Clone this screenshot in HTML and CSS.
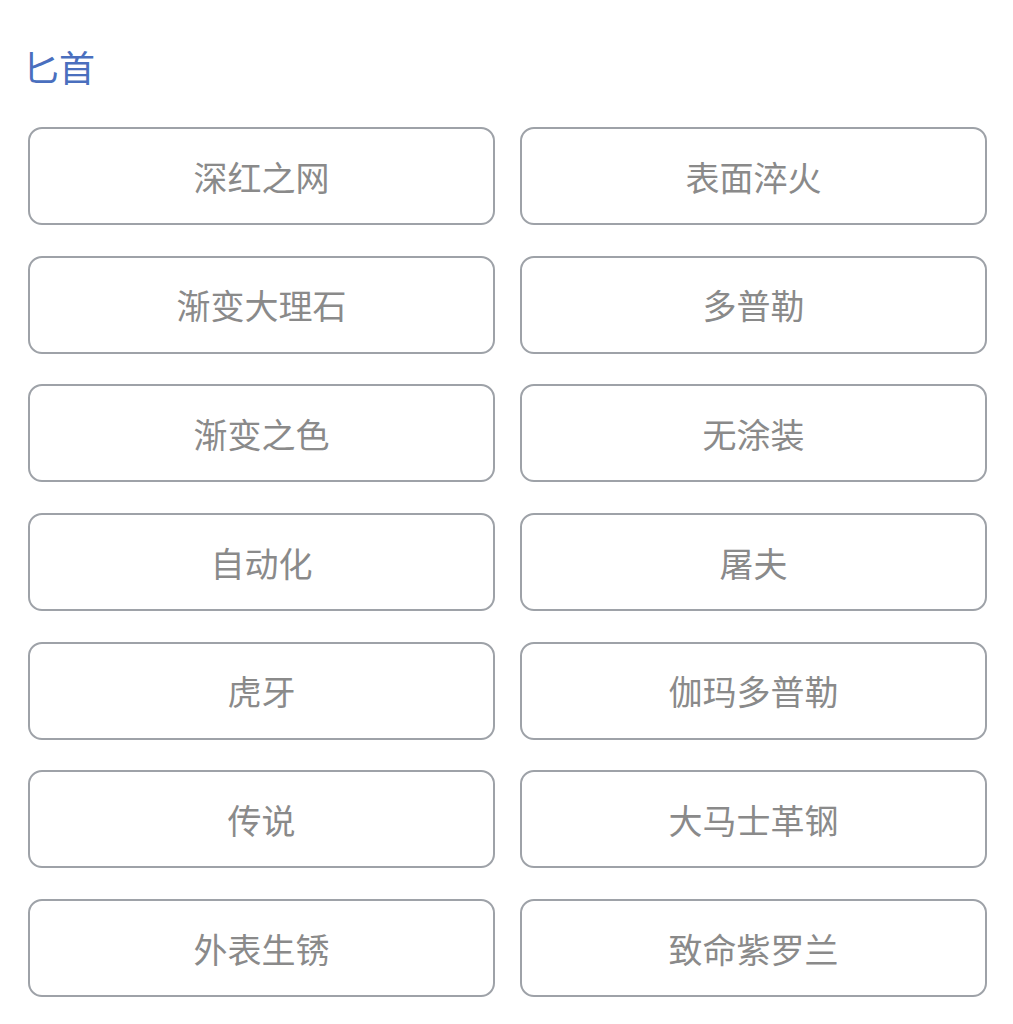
FILE: index.html
```html
<html>
<head>
  <meta charset="utf-8">
  <title>匕首</title>
  <link rel="stylesheet" href="styles.css">
</head>
<body>
  <div class="panel">
    <h2 class="weapon-title">匕首</h2>
    <div class="skin-grid">
      <button class="skin">深红之网</button>
      <button class="skin">表面淬火</button>
      <button class="skin">渐变大理石</button>
      <button class="skin">多普勒</button>
      <button class="skin">渐变之色</button>
      <button class="skin">无涂装</button>
      <button class="skin">自动化</button>
      <button class="skin">屠夫</button>
      <button class="skin">虎牙</button>
      <button class="skin">伽玛多普勒</button>
      <button class="skin">传说</button>
      <button class="skin">大马士革钢</button>
      <button class="skin">外表生锈</button>
      <button class="skin">致命紫罗兰</button>
    </div>
  </div>
</body>
</html>
```

FILE: styles.css
```css
body {
    margin: 0;
    background-color: #ffffff;
    font-family: "Noto Sans CJK SC", "Noto Sans", sans-serif;
}

.panel {
    padding: 47px 26px 0 28px;
}

.weapon-title {
    margin: 0 0 42px -5px;
    font-size: 36px;
    line-height: 38px;
    font-weight: normal;
    color: #4a6fbe;
}

.skin-grid {
    display: grid;
    grid-template-columns: 1fr 1fr;
    column-gap: 25px;
    row-gap: 30.7px;
}

.skin {
    height: 98px;
    border: 2px solid #9ea2a8;
    border-radius: 14px;
    background-color: #ffffff;
    color: #8a8a8a;
    font-family: "Noto Sans CJK SC", "Noto Sans", sans-serif;
    font-size: 34px;
    padding: 0;
}
```
